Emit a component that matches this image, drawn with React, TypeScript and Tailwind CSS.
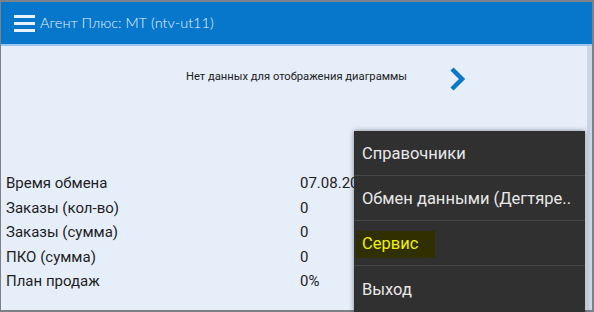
import React from 'react';

const rows = [
  { label: 'Время обмена', value: '07.08.2017 10:15' },
  { label: 'Заказы (кол-во)', value: '0' },
  { label: 'Заказы (сумма)', value: '0' },
  { label: 'ПКО (сумма)', value: '0' },
  { label: 'План продаж', value: '0%' },
];

const menu = ['Справочники', 'Обмен данными (Дегтяре..', 'Сервис', 'Выход'];

export default function App() {
  return (
    <div className="relative w-[594px] h-[312px] overflow-hidden bg-[#7b8089] pt-[2px] pl-px pr-[2px] pb-[2px] font-['Roboto',sans-serif]">
      <div className="flex flex-col h-full bg-[#e6eefa]">
        {/* Toolbar */}
        <div className="flex items-center h-[44px] bg-[#0677cb] border-b-2 border-[#9cc6ee] pl-[13px]">
          <div className="flex flex-col gap-[4px] w-[21px]">
            <span className="h-[3px] bg-[#e8f2fb]" />
            <span className="h-[3px] bg-[#e8f2fb]" />
            <span className="h-[3px] bg-[#e8f2fb]" />
          </div>
          <span className="ml-[5px] text-[14.5px] font-light text-[#e8f1fa] font-['Lato',sans-serif]">
            Агент Плюс: МТ (ntv-ut11)
          </span>
        </div>

        <div className="flex flex-1 min-h-0">
          <div className="flex-1 flex flex-col">
            {/* Chart placeholder */}
            <div className="flex items-center h-[62px] pl-[185px] pt-[1px]">
              <span className="text-[11.2px] text-[#222]">Нет данных для отображения диаграммы</span>
              <svg className="ml-[42px] mt-[2px]" width="18" height="26" viewBox="0 0 18 26">
                <path d="M3 3 L13 13 L3 23" fill="none" stroke="#0a78c8" strokeWidth="4.5" />
              </svg>
            </div>

            {/* Stats */}
            <div className="flex flex-col pt-[63px] pl-[5px]">
              {rows.map((r) => (
                <div key={r.label} className="flex items-center h-[24.5px] text-[15px] text-[#1e1e1e]">
                  <span className="w-[294px]">{r.label}</span>
                  <span className="whitespace-nowrap">{r.value}</span>
                </div>
              ))}
            </div>
          </div>
          <div className="w-[5px] bg-[#cbd6e4]" />
        </div>
      </div>

      {/* Overflow menu */}
      <div className="absolute left-[354px] top-[131px] w-[231px] h-[181px] bg-[#303030] shadow-[0_0_5px_rgba(0,0,0,0.45)]">
        {menu.map((m, i) => (
          <div
            key={m}
            className={`flex items-center h-[45px] px-[2px] pt-[3px] ${i < menu.length - 1 ? 'border-b border-[#464646]' : ''}`}
          >
            {i === 2 ? (
              <span className="flex items-center h-[27px] w-[79px] pl-[6px] bg-[#2f2f00] text-[16.5px] text-[#f2f200]">{m}</span>
            ) : (
              <span className="pl-[6px] text-[16.5px] text-[#e8e8e8] whitespace-nowrap">{m}</span>
            )}
          </div>
        ))}
      </div>
    </div>
  );
}
